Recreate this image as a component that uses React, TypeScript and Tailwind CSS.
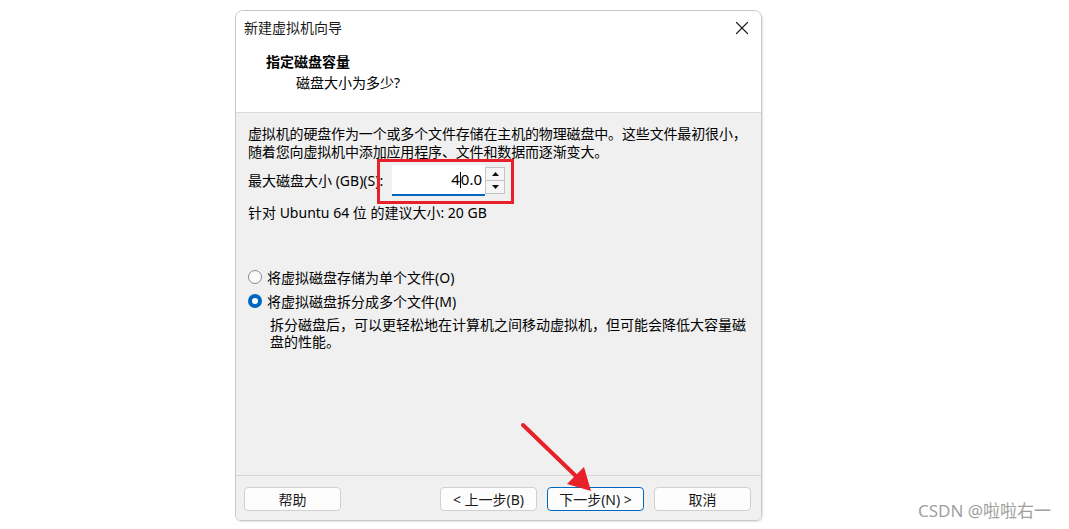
import React from "react";
import { X } from "lucide-react";

const font = { fontFamily: '"Noto Sans", "Noto Sans CJK SC", sans-serif' };

function Radio({ checked }: { checked?: boolean }) {
  return checked ? (
    <span className="flex h-[14px] w-[14px] items-center justify-center rounded-full bg-[#0067c0]">
      <span className="h-[6px] w-[6px] rounded-full bg-white" />
    </span>
  ) : (
    <span className="h-[14px] w-[14px] rounded-full border border-[#8a8a8a] bg-[#fafafa]" />
  );
}

function Btn({ children, primary }: { children: React.ReactNode; primary?: boolean }) {
  return (
    <button
      className={
        primary
          ? "flex h-[24px] w-[97px] items-center justify-center rounded-[4px] border border-[#0067c0] bg-[#fdfdfd] text-[14px] text-[#1a1a1a]"
          : "flex h-[24px] w-[97px] items-center justify-center rounded-[4px] border border-[#d0d0d0] bg-[#fdfdfd] text-[14px] text-[#1a1a1a]"
      }
    >
      {children}
    </button>
  );
}

export default function App() {
  return (
    <div className="relative h-[529px] w-[1069px] overflow-hidden bg-white" style={font}>
      <div className="ml-[235px] pt-[10px]">
        <div className="flex h-[511px] w-[527px] flex-col overflow-hidden rounded-t-[8px] rounded-b-[6px] border border-[#c9c9c9] shadow-[1px_1px_2px_rgba(0,0,0,0.12)]">
          {/* header */}
          <div className="h-[102px] border-b border-[#dadada] bg-white">
            <div className="flex h-[34px] items-center justify-between pl-[8px] pr-[8px]">
              <span className="text-[14px] leading-[20px] text-[#1a1a1a]">新建虚拟机向导</span>
              <X size={22} strokeWidth={1.3} color="#222" />
            </div>
            <div className="mt-[7px] pl-[30px] text-[14px] font-bold leading-[20px] text-black">指定磁盘容量</div>
            <div className="mt-[1px] pl-[60px] text-[14px] leading-[20px] text-black">磁盘大小为多少?</div>
          </div>

          {/* body */}
          <div className="flex-1 bg-[#f0f0f0] pl-[12px] pt-[12px] text-[14px] text-black">
            <div className="leading-[18px] tracking-[-0.15px]">
              虚拟机的硬盘作为一个或多个文件存储在主机的物理磁盘中。这些文件最初很小，
              <br />
              随着您向虚拟机中添加应用程序、文件和数据而逐渐变大。
            </div>

            <div className="mt-[4px] flex h-[31px] items-center">
              <span className="w-[144px] leading-[18px]">最大磁盘大小 (GB)(S):</span>
              <div className="flex h-[31px] w-[93px] items-center justify-end border-b-2 border-[#0067c0] bg-white pr-[3px] text-[15px]">
                <span>4</span>
                <span className="h-[16px] w-[1px] bg-black" />
                <span>0.0</span>
              </div>
              <div className="flex h-[27px] w-[20px] flex-col border border-[#c4c4c4] bg-[#f6f6f6]">
                <div className="flex flex-1 items-center justify-center border-b border-[#c4c4c4]">
                  <svg width="7" height="4" viewBox="0 0 7 4"><polygon points="3.5,0 7,4 0,4" fill="#111" /></svg>
                </div>
                <div className="flex flex-1 items-center justify-center">
                  <svg width="7" height="4" viewBox="0 0 7 4"><polygon points="0,0 7,0 3.5,4" fill="#111" /></svg>
                </div>
              </div>
            </div>

            <div className="mt-[8px] leading-[18px]">针对 Ubuntu 64 位 的建议大小: 20 GB</div>

            <div className="mt-[43px] flex h-[24px] items-center gap-[5px]">
              <Radio />
              <span>将虚拟磁盘存储为单个文件(O)</span>
            </div>
            <div className="flex h-[24px] items-center gap-[5px]">
              <Radio checked />
              <span>将虚拟磁盘拆分成多个文件(M)</span>
            </div>
            <div className="mt-[3px] pl-[22px] leading-[17px]">
              拆分磁盘后，可以更轻松地在计算机之间移动虚拟机，但可能会降低大容量磁
              <br />
              盘的性能。
            </div>
          </div>

          {/* footer */}
          <div className="flex h-[45px] items-start justify-between border-t border-[#d6d6d6] bg-[#f0f0f0] pl-[8px] pr-[10px] pt-[11px]">
            <Btn>帮助</Btn>
            <div className="flex gap-[10px]">
              <Btn>&lt; 上一步(B)</Btn>
              <Btn primary>下一步(N) &gt;</Btn>
              <Btn>取消</Btn>
            </div>
          </div>
        </div>
      </div>

      {/* annotation: red box */}
      <div className="pointer-events-none absolute left-[377px] top-[159px] h-[45px] w-[137px] border-[3px] border-[#e8202a]" />

      {/* annotation: red arrow */}
      <svg className="pointer-events-none absolute left-0 top-0" width="1069" height="529">
        <line x1="523" y1="425" x2="580" y2="480" stroke="#e8202a" strokeWidth="4" strokeLinecap="round" />
        <polygon points="591,491 567,484 584,467" fill="#e8202a" />
      </svg>

      {/* watermark */}
      <div className="absolute left-[918px] top-[500px] text-[17px] leading-[22px] text-[#a0a0a0]">CSDN @啦啦右一</div>
    </div>
  );
}
